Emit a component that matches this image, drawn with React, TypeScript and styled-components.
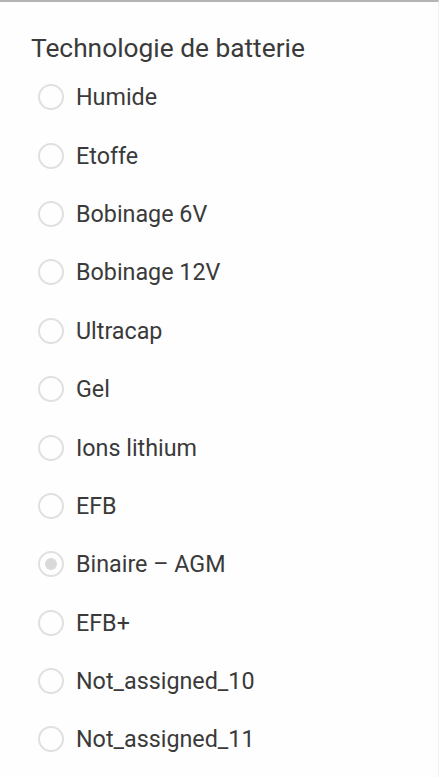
import React from "react";
import styled, { createGlobalStyle } from "styled-components";

const Global = createGlobalStyle`
  html, body { margin: 0; padding: 0; background: #ffffff; }
  body { font-family: Roboto, "Noto Sans", Arial, sans-serif; }
`;

const Panel = styled.div`
  box-sizing: border-box;
  width: 439px;
  min-height: 777px;
  border-top: 2px solid #b4b4b4;
  border-right: 1px solid #efefef;
  padding: 30px 0 0 31px;
  background: #fefefe;
`;

const Title = styled.div`
  font-size: 26.3px;
  font-weight: 400;
  line-height: 32px;
  color: #3a3a3a;
  margin-bottom: 4px;
`;

const List = styled.div`
  display: flex;
  flex-direction: column;
`;

const Row = styled.label`
  display: flex;
  align-items: center;
  height: 58.4px;
  padding-left: 7px;
  gap: 12px;
`;

const Circle = styled.span<{ $checked?: boolean }>`
  box-sizing: border-box;
  width: 26px;
  height: 26px;
  border-radius: 50%;
  border: 2px solid #e0e0e0;
  display: flex;
  align-items: center;
  justify-content: center;
  flex: none;
  &::after {
    content: "";
    display: ${(p) => (p.$checked ? "block" : "none")};
    width: 12px;
    height: 12px;
    border-radius: 50%;
    background: #d9d9d9;
  }
`;

const Label = styled.span`
  font-size: 23.3px;
  font-weight: 400;
  line-height: 28px;
  color: #3a3a3a;
`;

const options = [
  "Humide",
  "Etoffe",
  "Bobinage 6V",
  "Bobinage 12V",
  "Ultracap",
  "Gel",
  "Ions lithium",
  "EFB",
  "Binaire – AGM",
  "EFB+",
  "Not_assigned_10",
  "Not_assigned_11",
];

export default function App() {
  return (
    <>
      <Global />
      <Panel>
        <Title>Technologie de batterie</Title>
        <List>
          {options.map((o, i) => (
            <Row key={o}>
              <Circle $checked={i === 8} />
              <Label>{o}</Label>
            </Row>
          ))}
        </List>
      </Panel>
    </>
  );
}
